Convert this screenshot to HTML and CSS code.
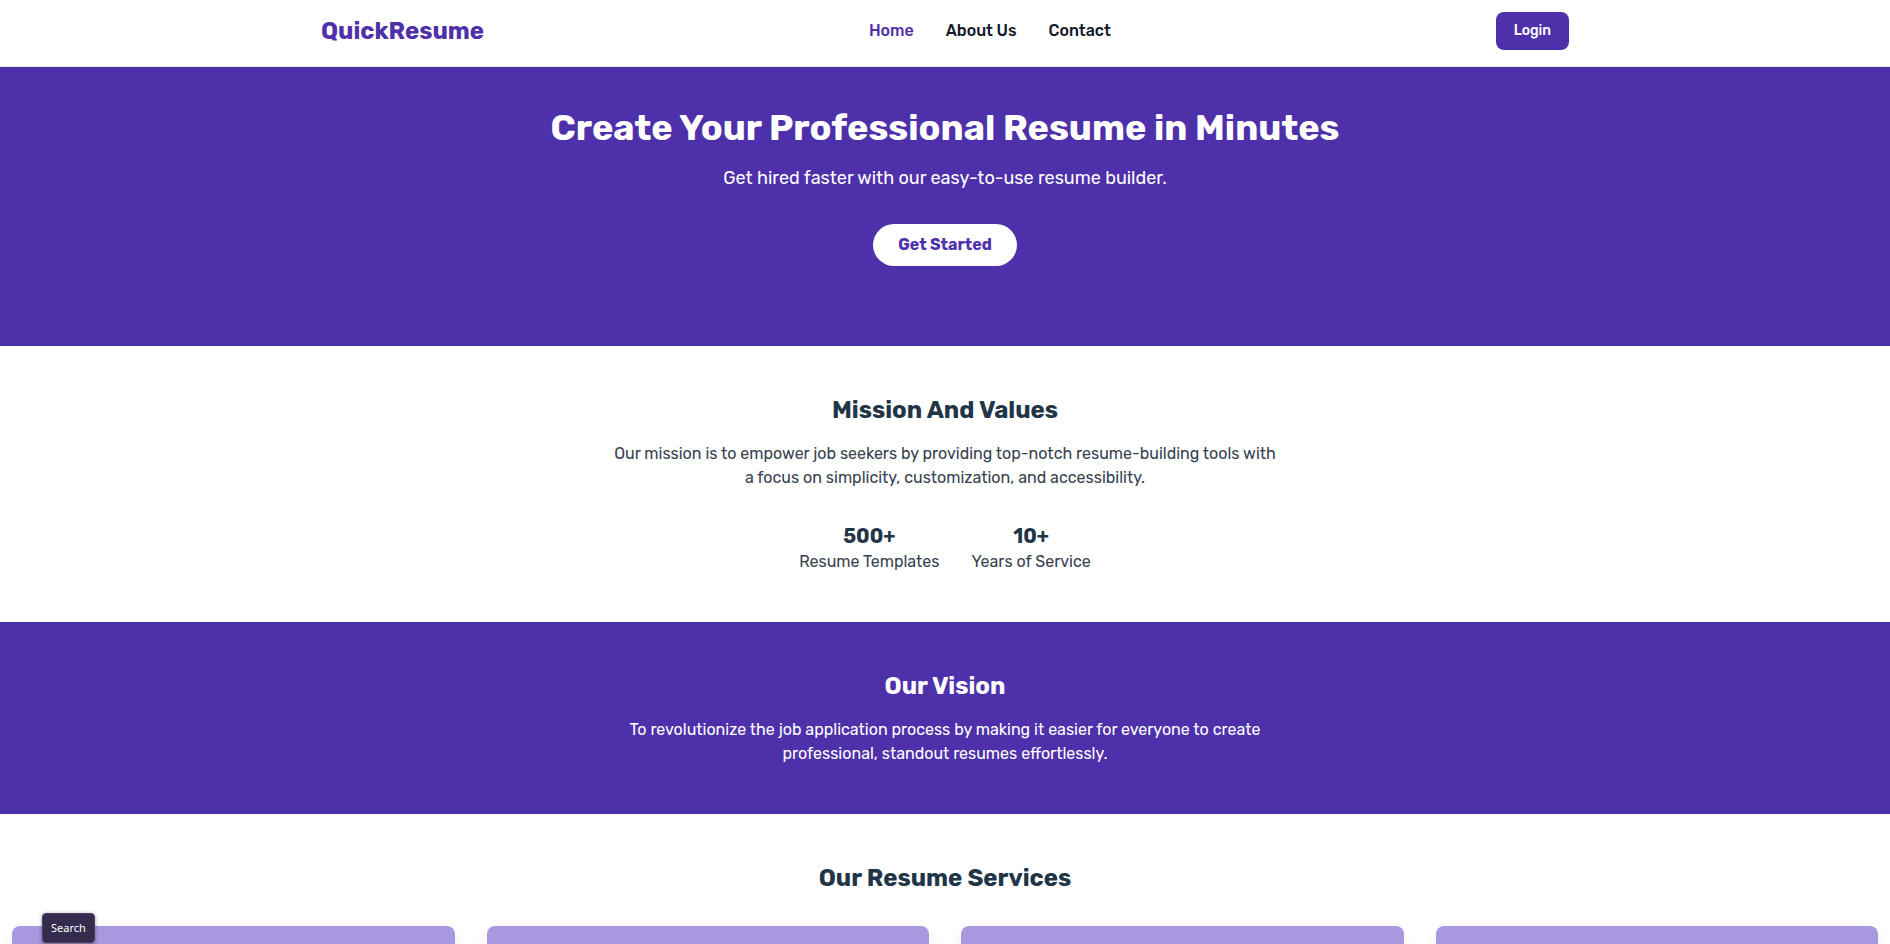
FILE: index.html
```html
<!DOCTYPE html>
<html lang="en">
<head>
<meta charset="utf-8">
<title>QuickResume</title>
<link rel="stylesheet" href="styles.css">
</head>
<body>
<header class="header">
  <div class="header-inner">
    <a class="logo" href="#">QuickResume</a>
    <nav class="nav">
      <a class="nav-link active" href="#">Home</a>
      <a class="nav-link" href="#">About Us</a>
      <a class="nav-link" href="#">Contact</a>
    </nav>
    <button class="login" type="button">Login</button>
  </div>
</header>
<main>
  <section class="hero">
    <h1 class="hero-title">Create Your Professional Resume in Minutes</h1>
    <p class="hero-text">Get hired faster with our easy-to-use resume builder.</p>
    <button class="cta" type="button">Get Started</button>
  </section>
  <section class="section">
    <h2 class="title">Mission And Values</h2>
    <p class="text">Our mission is to empower job seekers by providing top-notch resume-building tools with a focus on simplicity, customization, and accessibility.</p>
    <div class="stats">
      <div class="stat"><h3 class="stat-value">500+</h3><p class="stat-label">Resume Templates</p></div>
      <div class="stat"><h3 class="stat-value">10+</h3><p class="stat-label">Years of Service</p></div>
    </div>
  </section>
  <section class="section vision">
    <h2 class="title">Our Vision</h2>
    <p class="text">To revolutionize the job application process by making it easier for everyone to create professional, standout resumes effortlessly.</p>
  </section>
  <section class="section services">
    <h2 class="title">Our Resume Services</h2>
    <div class="cards">
      <article class="card"></article>
      <article class="card"></article>
      <article class="card"></article>
      <article class="card"></article>
    </div>
  </section>
</main>
<div class="tooltip" role="tooltip">Search</div>
</body>
</html>
```
FILE: styles.css
```css
* { box-sizing: border-box; margin: 0; }
body {
  height: 100vh;
  overflow: hidden;
  background: #fff;
  color: #374151;
  font-family: Rubik, Inter, sans-serif;
  font-size: 16px;
  line-height: 24px;
}
a { color: inherit; text-decoration: none; }
button { border: 0; font-family: inherit; cursor: pointer; }
.header { border-bottom: 1px solid #e5e7eb; }
.header-inner {
  display: flex;
  align-items: center;
  justify-content: space-between;
  max-width: 1280px;
  margin: 0 auto;
  padding: 12px 16px 16px;
}
.logo { color: #4e31aa; font-size: 24px; font-weight: 700; line-height: 32px; }
.nav { display: flex; gap: 32px; color: #111827; font-weight: 500; }
.active { color: #4e31aa; }
.login {
  padding: 9px 18px;
  border-radius: 8px;
  background: #4e31aa;
  color: #fff;
  font-size: 14px;
  font-weight: 500;
  line-height: 20px;
}
.hero {
  padding: 41px 16px 80px;
  background: #4e31aa;
  color: #fff;
  text-align: center;
}
.hero-title { font-size: 36px; font-weight: 700; line-height: 40px; }
.hero-text { margin: 16px 0 32px; font-size: 18px; line-height: 28px; }
.cta {
  padding: 9px 25px;
  border-radius: 24px;
  background: #fff;
  color: #4e31aa;
  font-size: 16px;
  font-weight: 700;
  line-height: 24px;
}
.section { padding: 48px 16px; text-align: center; }
.title { color: #213547; font-size: 24px; font-weight: 700; line-height: 32px; }
.text { max-width: 672px; margin: 16px auto 0; }
.stats { display: flex; justify-content: center; gap: 32px; margin-top: 32px; }
.stat-value { color: #213547; font-size: 20px; font-weight: 700; line-height: 28px; }
.vision, .vision .title { color: #fff; }
.vision { background: #4e31aa; }
.services { padding: 48px 12px; }
.cards {
  display: grid;
  grid-template-columns: repeat(4, 1fr);
  gap: 32px;
  margin-top: 32px;
}
.card {
  min-height: 240px;
  border-radius: 8px;
  background: #a998df;
  box-shadow: 0 10px 15px rgba(0, 0, 0, 0.1);
}
.tooltip {
  position: absolute;
  bottom: 1px;
  left: 42px;
  padding: 6px 8px;
  border: 1px solid #4a4160;
  border-radius: 4px;
  background: #352b4d;
  box-shadow: 0 1px 4px rgba(0, 0, 0, 0.4);
  color: #fff;
  font-family: "Noto Sans", sans-serif;
  font-size: 11px;
  line-height: 16px;
}
```
